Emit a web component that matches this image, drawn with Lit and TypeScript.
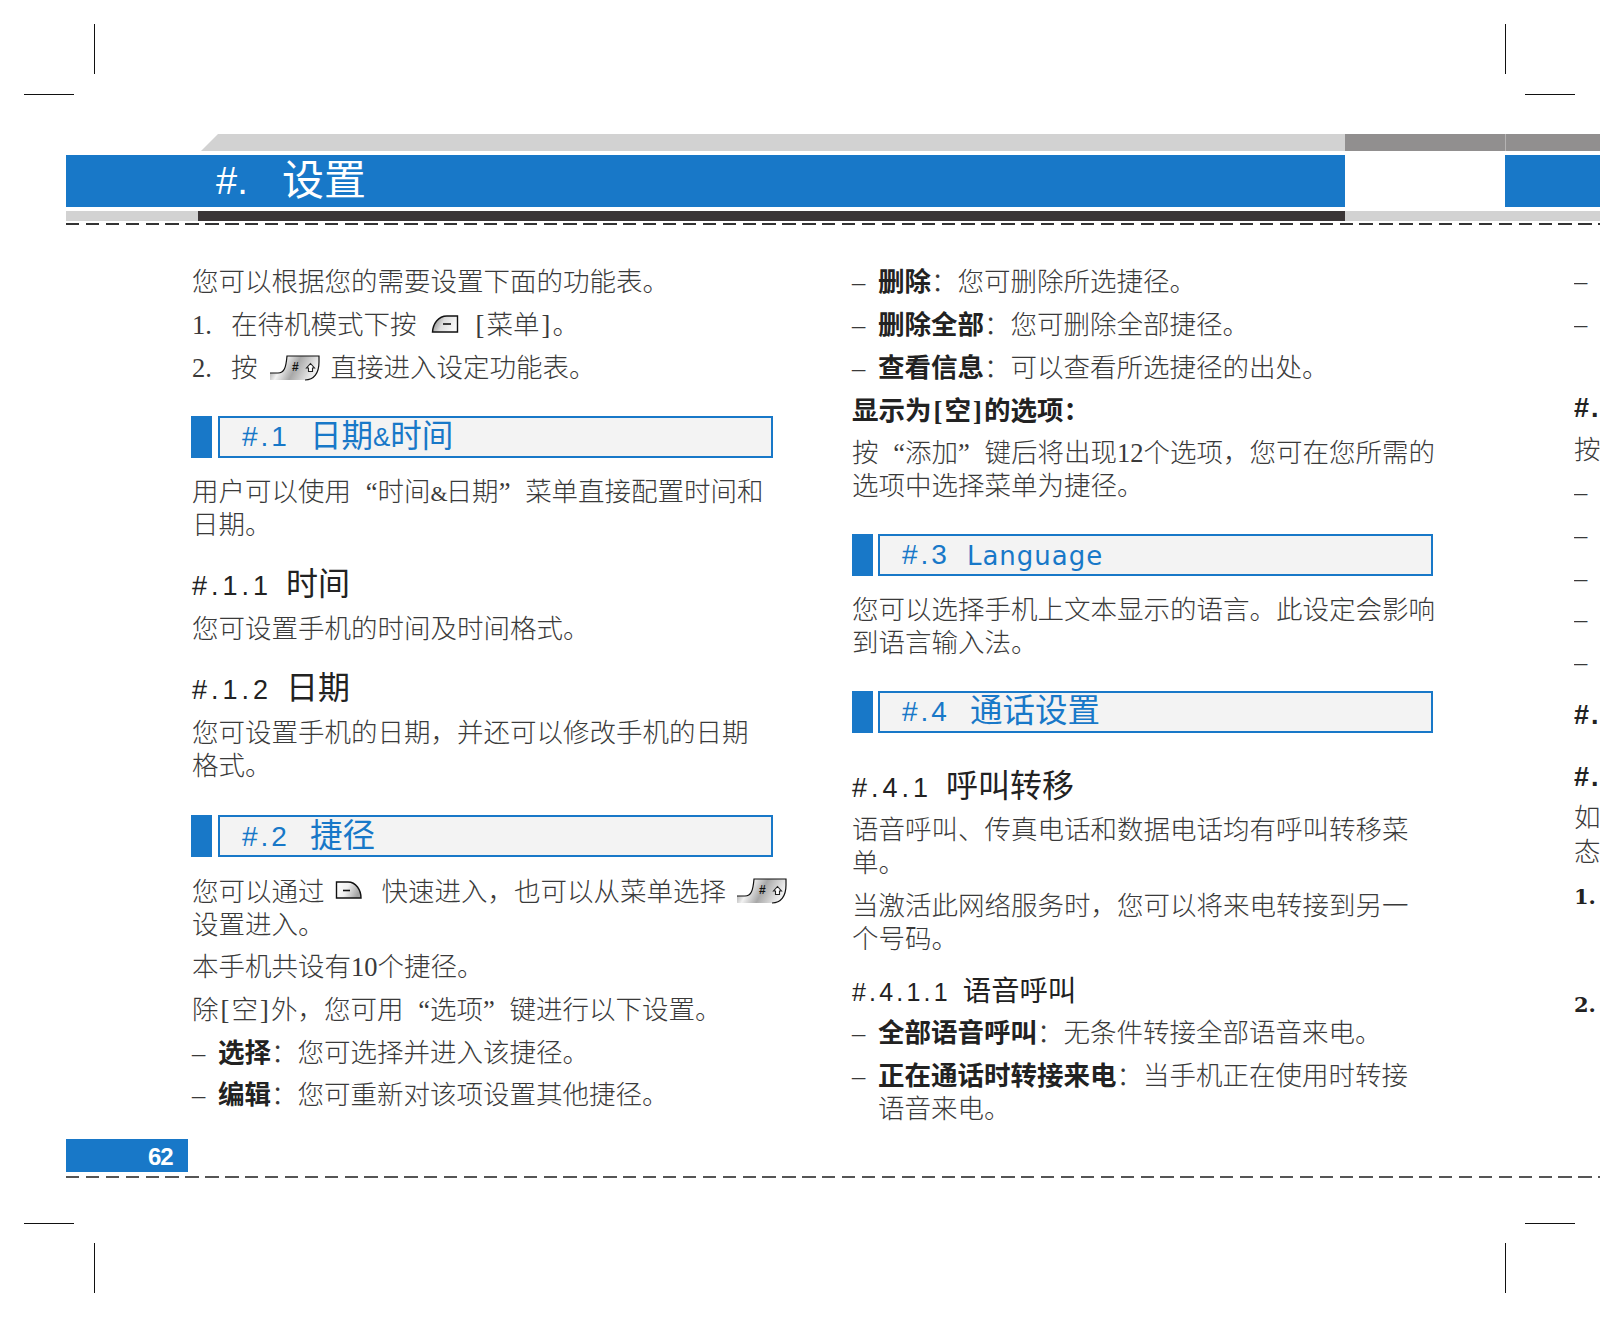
import { LitElement, html, css, svg } from "lit";
import { customElement } from "lit/decorators.js";

const softKey = (id: string, mirrored: boolean) => html`<svg class="ikey" width="28" height="20" viewBox="0 0 28 20">
  <defs><linearGradient id=${id} x1="0" x2="1" y1="0" y2="0.3">
    <stop offset="0" stop-color=${mirrored ? "#ffffff" : "#777777"}/>
    <stop offset="0.5" stop-color=${mirrored ? "#f0f0f0" : "#dcdcdc"}/>
    <stop offset="1" stop-color=${mirrored ? "#a5a5a5" : "#f8f8f8"}/>
  </linearGradient></defs>
  ${mirrored
    ? svg`<path d="M1.5 2H13C21 2 26 10 26 18H1.5Z" fill="url(#${id})" stroke="#111" stroke-width="1.4"/><path d="M8 10.5h7" stroke="#111" stroke-width="1.6"/>`
    : svg`<path d="M1.5 18C2 10 7 2 16 2H26.5V18Z" fill="url(#${id})" stroke="#111" stroke-width="1.4"/><path d="M12 10h8" stroke="#111" stroke-width="1.6"/>`}
</svg>`;

const hashKey = (id: string) => html`<svg class="ikey" width="52" height="26" viewBox="0 0 52 26">
  <defs><linearGradient id=${id} x1="0" x2="1" y1="0" y2="0.25">
    <stop offset="0" stop-color="#777"/><stop offset="0.32" stop-color="#f2f2f2"/>
    <stop offset="0.6" stop-color="#a8a8a8"/><stop offset="1" stop-color="#efefef"/>
  </linearGradient></defs>
  <path d="M1 18H9C15 18 17 13 18 1H50V7C50 18 45 25 36 25H1Z" fill="url(#${id})"/>
  <path d="M1 18H9C15 18 17 13 18 1H50V7C50 18 45 25 36 25" fill="none" stroke="#111" stroke-width="1.2"/>
  <text x="23" y="15.5" class="ktxt">#</text>
  <path d="M41.5 8.5l4 4.5h-2v3.5h-4V13h-2z" fill="#fff" stroke="#222" stroke-width="1.1"/>
</svg>`;

const ql = html`<span class="ql">“</span>`;
const qr = html`<span class="qr">”</span>`;
const amp = html`<span class="amp">&amp;</span>`;
const bl = html`<span class="br">[</span>`;
const brr = html`<span class="br">]</span>`;
const label = (t: string) => html`<strong>${t}</strong><span>：</span>`;

const rightRows: [string, string, number][] = [
  ["–", "rd", 40], ["–", "rd", 10],
  ["#.", "rh", 51], ["按", "r", 9], ["–", "rd", 9], ["–", "rd", 10], ["–", "rd", 10], ["–", "rd", 8], ["–", "rd", 10],
  ["#.", "rh", 20], ["#.", "rh", 29], ["如", "r", 8], ["态", "r", 1], ["1.", "rn", 11], ["2.", "rn", 75],
];

@customElement("app-root")
export class AppRoot extends LitElement {
  static styles = css`
    :host { display: block; width: 1600px; height: 1318px; overflow: hidden; position: relative; background: #fff;
      font-family: "Liberation Serif", "Noto Sans CJK SC", serif; color: #3a3a3a; }
    .page { padding-top: 134px; width: 1600px; }
    .mark { position: absolute; background: #111; }
    .mark.v { width: 1px; height: 50px; }
    .mark.h { height: 1px; width: 50px; }
    .v.a { top: 24px; } .v.b { top: 1243px; } .h.a { top: 94px; } .h.b { top: 1223px; }
    .v.l { left: 94px; } .v.r { left: 1505px; } .h.l { left: 24px; } .h.r { left: 1525px; }

    .topbar { display: flex; height: 17px; padding-left: 201px; }
    .tb-light { width: 1144px; background: #d2d2d2; clip-path: polygon(17px 0, 100% 0, 100% 100%, 0 100%); }
    .tb-dark { width: 160px; background: #918f8f; }
    .tb-dark2 { flex: 1; background: #918f8f; border-left: 1px solid #b5b3b3; }
    .blue { display: flex; height: 52px; margin-top: 4px; padding-left: 66px; }
    .blue-main { width: 1279px; background: #1878c8; color: #fff; display: flex; align-items: center; padding-left: 150px; box-sizing: border-box;
      font-family: "Liberation Sans", "Noto Sans CJK SC", sans-serif; }
    .t-num { font-size: 38px; width: 66px; }
    .t-txt { font-size: 42px; line-height: 52px; }
    .blue-end { margin-left: 160px; flex: 1; background: #1878c8; }
    .strip { display: flex; height: 10px; margin: 4px 0 0 66px; }
    .s1 { width: 132px; background: #d2d2d2; }
    .s2 { width: 1147px; background: #3a3536; }
    .s3 { flex: 1; background: #d2d2d2; }
    .dash { height: 2px; margin: 2px 0 0 66px; background: repeating-linear-gradient(90deg, #333 0 13.3px, transparent 13.3px 19.9px); }

    .cols { display: flex; height: 914px; padding-left: 192px; padding-top: 40.5px; box-sizing: border-box; overflow: hidden;
      font-size: 26.5px; line-height: 33px; font-weight: 300; white-space: nowrap; }
    .col1 { width: 660px; flex: none; }
    .col2 { width: 722px; flex: none; }
    .col3 { width: 26px; flex: none; margin-top: -40.5px; overflow: hidden; }
    p { margin: 0 0 9.8px; }
    p.top { margin-bottom: 10px; }
    .n { display: flex; margin: 0 0 10px; align-items: center; height: 33px; }
    .n > b { font-weight: 400; width: 39px; flex: none; }
    .ikey { vertical-align: -3px; flex: none; }
    .ktxt { font: 700 12px "Liberation Sans", sans-serif; fill: #111; }
    .g1 { margin: 0 15px 0 14px; }
    .g1 .ikey { vertical-align: 0; }
    .g2 { margin: 0 10px 0 11px; }
    .g2 .ikey { vertical-align: -4px; }
    .g3 { margin: 0 19px 0 10px; }
    .g3 .ikey { vertical-align: 1px; }
    .g4 { margin: 0 0 0 10px; }
    .g3, .g4 { line-height: 0; }
    .ql, .qr { display: inline-block; width: 26.5px; }
    .ql { text-align: right; }
    .qr { text-align: left; }
    .amp { font-size: 22px; letter-spacing: -2px; line-height: 0; }
    .br { display: inline-block; width: 13px; text-align: center; }
    .li { display: flex; margin: 0 0 10px; }
    .li > i { font-style: normal; width: 26px; flex: none; }
    .col1 .li { margin-bottom: 9.4px; }
    strong { font-weight: 700; color: #222; }
    .sec { display: flex; height: 42px; margin: 31px 0 18.5px -1px; gap: 6px; width: 582px;
      font-family: "Liberation Sans", "Noto Sans CJK SC", sans-serif; color: #1878c8; font-weight: 400; }
    .sec.second { margin-top: 32px; }
    .col2 .sec { margin-left: 0; width: 581px; gap: 5px; }
    .col2 .sec.s { margin-bottom: 18px; }
    .col2 .sec.big { margin-bottom: 37.5px; }
    .sec > u { width: 21px; background: #1878c8; flex: none; }
    .sec > div { flex: 1; box-sizing: border-box; border: 2px solid #1878c8; background: #f3f3f3; padding-left: 22px;
      display: flex; align-items: center; font-size: 32.5px; }
    .sec.d > div { font-size: 31.5px; }
    .sn { font-size: 28px; letter-spacing: 3px; margin-right: 20px; }
    .sec .amp { font-size: 26px; letter-spacing: 0; }
    .en { font-family: "DejaVu Sans", sans-serif; font-size: 26px; letter-spacing: 1px; margin-left: -3px; padding-top: 3px; }
    h3, h4 { margin: 0; font-family: "Liberation Sans", "Noto Sans CJK SC", sans-serif; font-weight: 400; color: #222; }
    h3 { font-size: 32px; line-height: 33px; margin: 26px 0 11.5px; }
    h3.loose { margin-bottom: 12.5px; }
    .col2 h3 { margin: 0 0 10.5px; }
    h3 span { font-size: 27px; letter-spacing: 4px; margin-right: 14px; line-height: 0; }
    h4 { font-size: 28.3px; line-height: 33px; margin: 19px 0 9.4px; }
    h4 span { font-size: 25px; letter-spacing: 3.2px; margin-right: 12px; line-height: 0; }
    h5 { margin: 0 0 9.4px; font-size: 26.5px; font-weight: 700; color: #222; }
    .r, .rd, .rh, .rn { height: 33px; line-height: 33px; }
    .rh { font: 700 27px/33px "Liberation Sans", sans-serif; color: #222; letter-spacing: 2px; }
    .rn { font: 700 21px/33px "DejaVu Serif", serif; color: #222; }

    .foot { height: 33px; width: 122px; margin-left: 66px; background: #1878c8; color: #fff; box-sizing: border-box; padding-left: 82px;
      font: 700 24px/35px "Liberation Sans", sans-serif; letter-spacing: -1px; }
    .dash.b { margin-top: 4px; background: repeating-linear-gradient(90deg, #555 0 13.3px, transparent 13.3px 19.9px); }
  `;

  render() {
    return html`
      ${["v a l","v a r","h a l","h a r","v b l","v b r","h b l","h b r"].map(c => html`<div class="mark ${c}"></div>`)}
      <div class="page" lang="zh-CN">
        <div class="topbar"><div class="tb-light"></div><div class="tb-dark"></div><div class="tb-dark2"></div></div>
        <div class="blue">
          <div class="blue-main"><span class="t-num">#.</span><span class="t-txt">设置</span></div>
          <div class="blue-end"></div>
        </div>
        <div class="strip"><div class="s1"></div><div class="s2"></div><div class="s3"></div></div>
        <div class="dash"></div>
        <div class="cols">
          <div class="col1">
            <p class="top">您可以根据您的需要设置下面的功能表。</p>
            <div class="n"><b>1.</b>在待机模式下按<span class="g1">${softKey("a", false)}</span>${bl}菜单${brr}。</div>
            <div class="n"><b>2.</b>按<span class="g2">${hashKey("b")}</span>直接进入设定功能表。</div>
            <div class="sec d"><u></u><div><span class="sn">#.1</span>日期${amp}时间</div></div>
            <p>用户可以使用${ql}时间${amp}日期${qr}菜单直接配置时间和<br />日期。</p>
            <h3><span>#.1.1</span>时间</h3>
            <p>您可设置手机的时间及时间格式。</p>
            <h3 class="loose"><span>#.1.2</span>日期</h3>
            <p>您可设置手机的日期，并还可以修改手机的日期<br />格式。</p>
            <div class="sec second"><u></u><div><span class="sn">#.2</span>捷径</div></div>
            <p>您可以通过<span class="g3">${softKey("c", true)}</span>快速进入，也可以从菜单选择<span class="g4">${hashKey("d")}</span><br />设置进入。</p>
            <p>本手机共设有10个捷径。</p>
            <p>除${bl}空${brr}外，您可用${ql}选项${qr}键进行以下设置。</p>
            <div class="li"><i>–</i><span>${label("选择")}您可选择并进入该捷径。</span></div>
            <div class="li"><i>–</i><span>${label("编辑")}您可重新对该项设置其他捷径。</span></div>
          </div>
          <div class="col2">
            <div class="li"><i>–</i><span>${label("删除")}您可删除所选捷径。</span></div>
            <div class="li"><i>–</i><span>${label("删除全部")}您可删除全部捷径。</span></div>
            <div class="li"><i>–</i><span>${label("查看信息")}可以查看所选捷径的出处。</span></div>
            <h5>显示为${bl}空${brr}的选项：</h5>
            <p>按${ql}添加${qr}键后将出现12个选项，您可在您所需的<br />选项中选择菜单为捷径。</p>
            <div class="sec s"><u></u><div><span class="sn">#.3</span><span class="en">Language</span></div></div>
            <p>您可以选择手机上文本显示的语言。此设定会影响<br />到语言输入法。</p>
            <div class="sec big"><u></u><div><span class="sn">#.4</span>通话设置</div></div>
            <h3><span>#.4.1</span>呼叫转移</h3>
            <p>语音呼叫、传真电话和数据电话均有呼叫转移菜<br />单。</p>
            <p>当激活此网络服务时，您可以将来电转接到另一<br />个号码。</p>
            <h4><span>#.4.1.1</span>语音呼叫</h4>
            <div class="li"><i>–</i><span>${label("全部语音呼叫")}无条件转接全部语音来电。</span></div>
            <div class="li"><i>–</i><span>${label("正在通话时转接来电")}当手机正在使用时转接<br />语音来电。</span></div>
          </div>
          <div class="col3">
            ${rightRows.map(([t, c, m]) => html`<div class=${c} style="margin-top:${m}px">${t}</div>`)}
          </div>
        </div>
        <div class="foot">62</div>
        <div class="dash b"></div>
      </div>
    `;
  }
}
